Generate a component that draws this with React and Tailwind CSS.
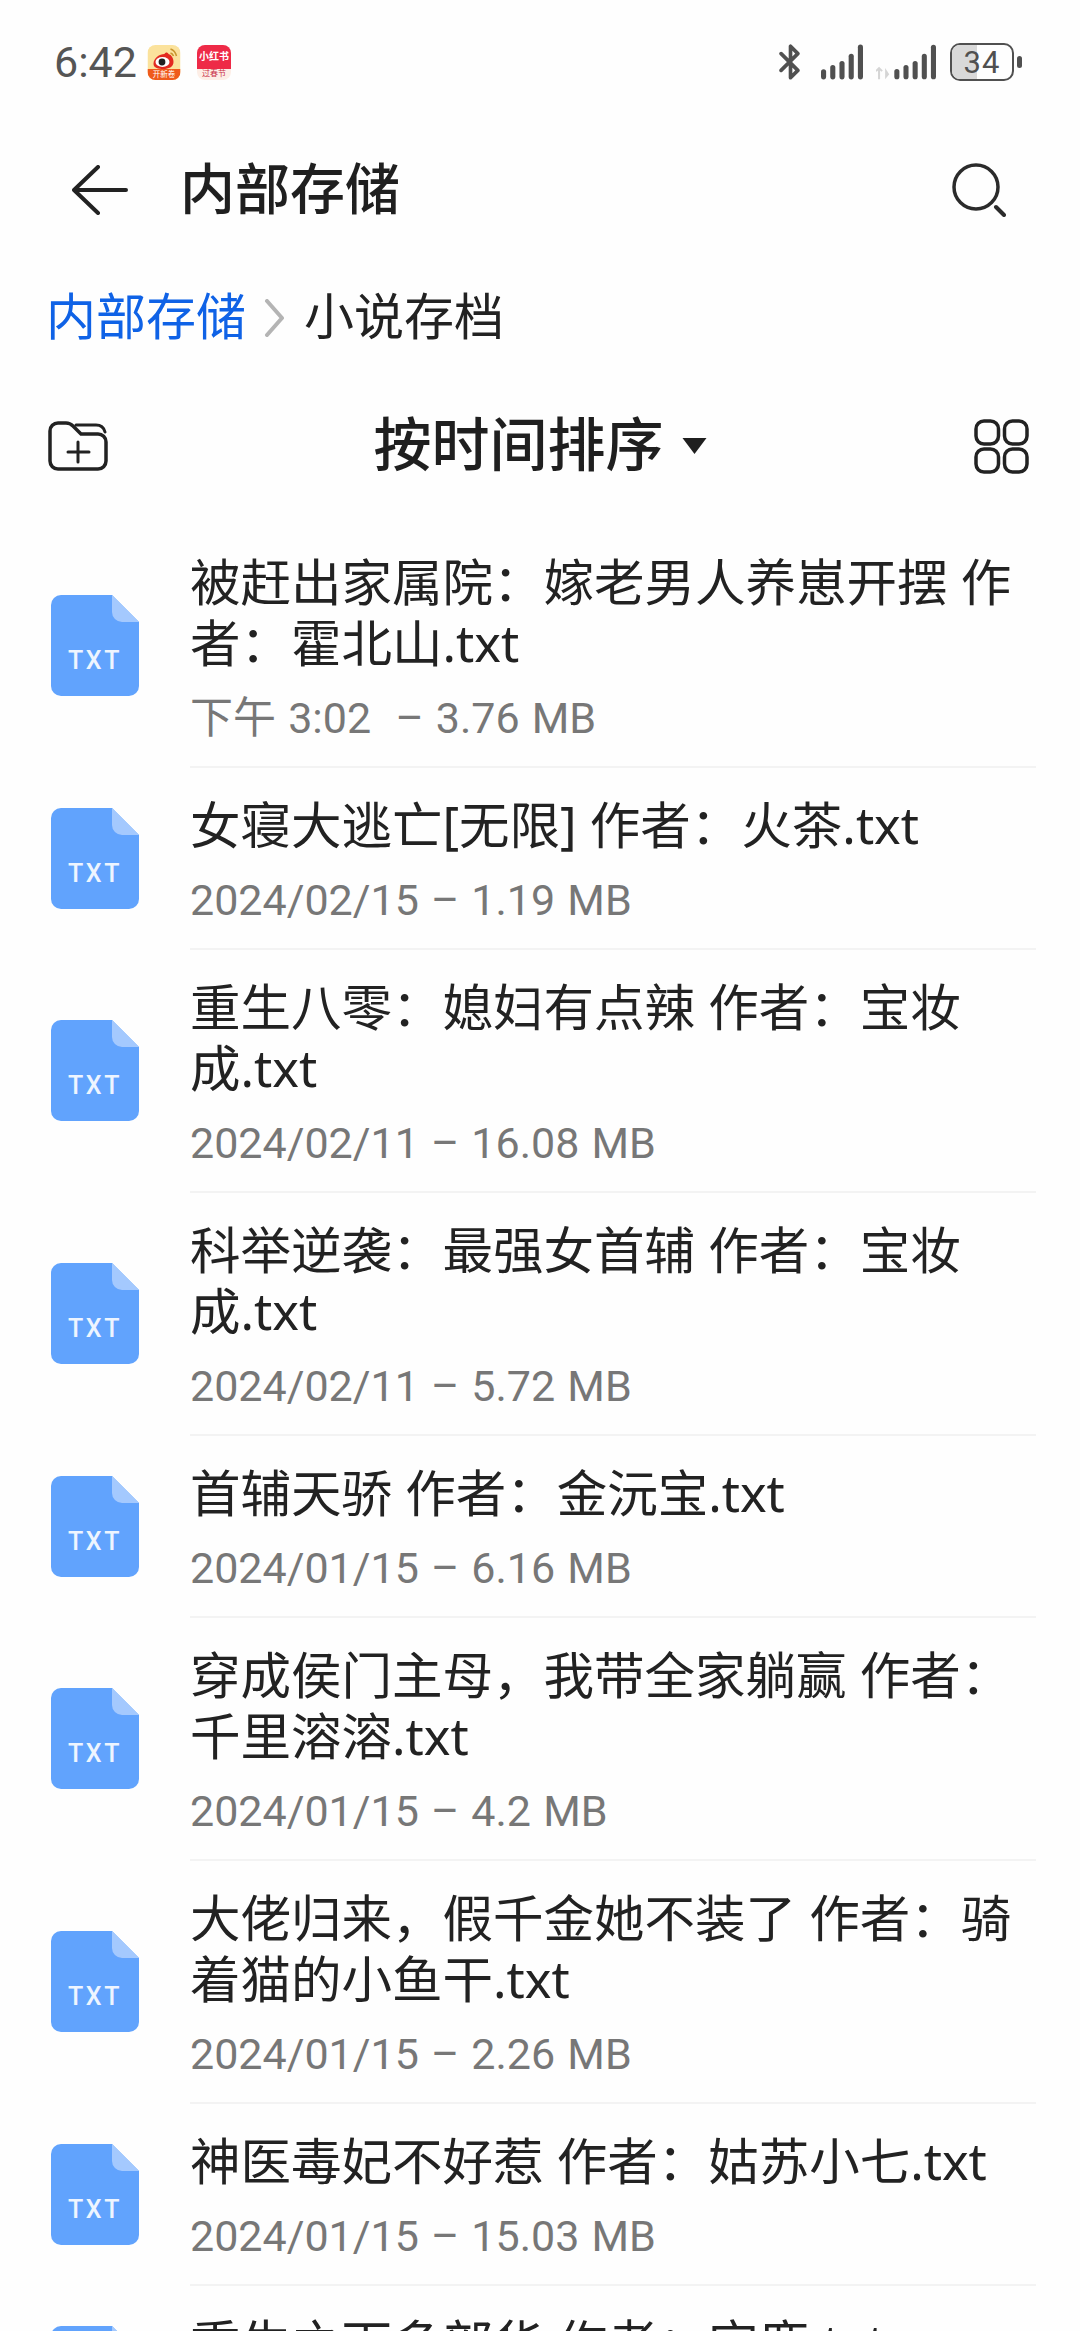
const FILES = [
  { name: '被赶出家属院\uFF1A嫁老男人养崽开摆 作者\uFF1A霍北山.txt', meta: '下午 3:02  – 3.76 MB' },
  { name: '女寝大逃亡[无限] 作者\uFF1A火茶.txt', meta: '2024/02/15 – 1.19 MB' },
  { name: '重生八零\uFF1A媳妇有点辣 作者\uFF1A宝妆成.txt', meta: '2024/02/11 – 16.08 MB' },
  { name: '科举逆袭\uFF1A最强女首辅 作者\uFF1A宝妆成.txt', meta: '2024/02/11 – 5.72 MB' },
  { name: '首辅天骄 作者\uFF1A金沅宝.txt', meta: '2024/01/15 – 6.16 MB' },
  { name: '穿成侯门主母\uFF0C我带全家躺赢 作者\uFF1A千里溶溶.txt', meta: '2024/01/15 – 4.2 MB' },
  { name: '大佬归来\uFF0C假千金她不装了 作者\uFF1A骑着猫的小鱼干.txt', meta: '2024/01/15 – 2.26 MB' },
  { name: '神医毒妃不好惹 作者\uFF1A姑苏小七.txt', meta: '2024/01/15 – 15.03 MB' },
  { name: '重生之下多部华 作者\uFF1A宝鹿.txt', meta: '2024/01/15 – 3.1 MB' },
]

function TxtIcon() {
  return (
    <svg width="88" height="101" viewBox="0 0 88 101" className="mb-[2px] shrink-0">
      <path d="M10 0H61L88 27V91a10 10 0 0 1-10 10H10A10 10 0 0 1 0 91V10A10 10 0 0 1 10 0Z" fill="#61a3fd" />
      <path d="M61 0L88 27H71a10 10 0 0 1-10-10Z" fill="#a4c9fe" />
      <text x="44" y="74" textAnchor="middle" fontFamily="Roboto" fontWeight="500" fontSize="25" letterSpacing="2.5" fill="#eef5ff">TXT</text>
    </svg>
  )
}

function WeiboIcon() {
  return (
    <svg width="34" height="35" viewBox="0 0 33 35">
      <defs>
        <clipPath id="wb"><rect width="33" height="35" rx="8" /></clipPath>
      </defs>
      <g clipPath="url(#wb)">
        <rect width="33" height="35" fill="#fbe29c" />
        <rect y="24" width="33" height="11" fill="#ef5a1c" />
        <path d="M6 19c0-6 6-10 11-10 1-2 3-2 4 0 3 1 5 4 5 8 0 5-5 7-10 7s-10-1-10-5Z" fill="#e32a20" />
        <ellipse cx="15" cy="17" rx="7" ry="5" fill="#fff" />
        <circle cx="14.5" cy="17" r="3.4" fill="#222" />
        <path d="M23 4c3 1 5 3 6 7M23 8c1.500 .5 2.500 1.500 3 3" stroke="#c9962e" strokeWidth="1.500" fill="none" />
        <text x="16.500" y="32" textAnchor="middle" fontSize="7.500" fill="#fff" fontFamily="Noto Sans CJK SC">开新卷</text>
      </g>
    </svg>
  )
}

function XhsIcon() {
  return (
    <div className="flex h-[35px] w-[34px] flex-col overflow-hidden rounded-[8px] bg-[#fdeee6]">
      <div className="flex h-[24px] items-center justify-center bg-[#ee2a47] text-[10px] leading-none font-bold whitespace-nowrap text-white">
        小红书
      </div>
      <div className="flex flex-1 items-center justify-center text-[8px] leading-none whitespace-nowrap text-[#c9304a]">
        过春节
      </div>
    </div>
  )
}

function StatusBar() {
  return (
    <div className="flex h-[124px] items-center justify-between pr-[58px] pl-[54px]">
      <div className="flex items-center">
        <span className="w-[93px] text-[43px] leading-none text-[#555555]">6:42</span>
        <WeiboIcon />
        <span className="w-[16px]" />
        <XhsIcon />
      </div>
      <div className="flex items-center">
        <svg width="22" height="36" viewBox="0 0 21 34" fill="none" stroke="#505050" strokeWidth="3.500" strokeLinejoin="round" strokeLinecap="round">
          <path d="M2 25L18 9L11 2V32L18 25L2 9" />
        </svg>
        <svg width="42" height="36" viewBox="0 0 41 34" fill="#505050" className="ml-[20px]">
          <rect x="0" y="24" width="5" height="10" rx="2.500" />
          <rect x="9" y="20" width="5" height="14" rx="2.500" />
          <rect x="18" y="16" width="5" height="18" rx="2.500" />
          <rect x="27" y="9" width="5" height="25" rx="2.500" />
          <rect x="36" y="0" width="5" height="34" rx="2.500" />
        </svg>
        <svg width="60" height="36" viewBox="0 0 59 34" fill="#505050" className="ml-[13px]">
          <path d="M3 23V34M0 26l3-3 3 3" stroke="#d5d5d5" strokeWidth="2" fill="none" />
          <path d="M9 23V34L13 29Z" fill="#d5d5d5" />
          <rect x="18" y="24" width="5" height="10" rx="2.500" />
          <rect x="27" y="20" width="5" height="14" rx="2.500" />
          <rect x="36" y="16" width="5" height="18" rx="2.500" />
          <rect x="45" y="9" width="5" height="25" rx="2.500" />
          <rect x="54" y="0" width="5" height="34" rx="2.500" />
        </svg>
        <div className="relative ml-[14px] flex h-[38px] w-[64px] items-center justify-center overflow-hidden rounded-[10px] border-[2.500px] border-[#505050]">
          <div className="absolute inset-y-0 left-0 w-[25px] bg-[#d9d9d9]" />
          <span className="relative text-[31px] leading-none tracking-[1px] text-[#505050]">34</span>
        </div>
        <div className="ml-[3px] h-[12px] w-[5px] rounded-full bg-[#505050]" />
      </div>
    </div>
  )
}

function TitleBar() {
  return (
    <div className="flex h-[132px] items-center justify-between pr-[74px] pl-[72px]">
      <div className="flex items-center">
        <svg width="56" height="50" viewBox="0 0 56 50" fill="none" stroke="#222222" strokeWidth="4" strokeLinecap="round" strokeLinejoin="round">
          <path d="M26 2L2 25L26 48M2 25H54" />
        </svg>
        <h1 className="ml-[52px] text-[55px] leading-none font-medium text-[#1f1f1f]">内部存储</h1>
      </div>
      <svg width="54" height="54" viewBox="0 0 54 54" fill="none" stroke="#2b2b2b" strokeLinecap="round">
        <circle cx="24" cy="24" r="22" strokeWidth="3.500" />
        <path d="M44 44L52 52" strokeWidth="4" />
      </svg>
    </div>
  )
}

function Breadcrumb() {
  return (
    <div className="flex h-[124px] items-center pl-[46px] text-[50px] leading-none">
      <span className="text-[#0f62e6]">内部存储</span>
      <svg width="20" height="38" viewBox="0 0 20 38" fill="none" stroke="#b4b4b4" strokeWidth="4" strokeLinecap="round" strokeLinejoin="round" className="ml-[18px]">
        <path d="M3 2L18 19L3 36" />
      </svg>
      <span className="ml-[20px] text-[#222222]">小说存档</span>
    </div>
  )
}

function SortBar() {
  return (
    <div className="grid h-[145px] grid-cols-[1fr_auto_1fr] items-center pb-[13px]">
      <div className="pl-[47px]">
        <svg width="62" height="50" viewBox="0 0 60 50" fill="none" stroke="#222222" strokeWidth="3.500" strokeLinecap="round" strokeLinejoin="round">
          <path d="M2 10a8 8 0 0 1 8-8h8c3 0 5 1 7 3l8 8h17a8 8 0 0 1 8 8v19a8 8 0 0 1-8 8H10a8 8 0 0 1-8-8Z" />
          <path d="M28 4h20c5 0 8 3 9 7" strokeWidth="3" />
          <path d="M20 31H41M30 21V41" strokeWidth="3" />
        </svg>
      </div>
      <div className="flex items-center">
        <span className="text-[58px] leading-none font-medium text-[#1f1f1f]">按时间排序</span>
        <svg width="25" height="16" viewBox="0 0 24 16" fill="#1f1f1f" className="ml-[18px]">
          <path d="M0 0H24L12 16Z" />
        </svg>
      </div>
      <div className="flex justify-end pr-[51px]">
        <svg width="55" height="55" viewBox="0 0 55 55" fill="none" stroke="#222222" strokeWidth="3.500">
          <rect x="2" y="2" width="22.500" height="23" rx="8" />
          <rect x="30.500" y="2" width="22.500" height="23" rx="8" />
          <rect x="2" y="30" width="22.500" height="23" rx="8" />
          <rect x="30.500" y="30" width="22.500" height="23" rx="8" />
        </svg>
      </div>
    </div>
  )
}

function FileRow({ name, meta }) {
  return (
    <div className="flex items-center pr-[44px] pl-[51px]">
      <TxtIcon />
      <div className="ml-[51px] min-w-0 flex-1 border-b-2 border-[#f3f3f3] pt-[26px] pb-[22px]">
        <p className="font-['Noto_Sans','Noto_Sans_CJK_SC',sans-serif] text-[50.500px] leading-[61px] text-[#222222]">{name}</p>
        <p className="mt-[19px] text-[43px] leading-[52px] [word-spacing:1.500px] whitespace-pre text-[#777777]">{meta}</p>
      </div>
    </div>
  )
}

export default function App() {
  return (
    <div lang="zh-CN" className="h-[2331px] w-[1080px] overflow-hidden bg-[#fefefe] font-['Roboto','Noto_Sans_CJK_SC',sans-serif]">
      <StatusBar />
      <TitleBar />
      <Breadcrumb />
      <SortBar />
      <div>
        {FILES.map((file) => (
          <FileRow key={file.name} name={file.name} meta={file.meta} />
        ))}
      </div>
    </div>
  )
}
